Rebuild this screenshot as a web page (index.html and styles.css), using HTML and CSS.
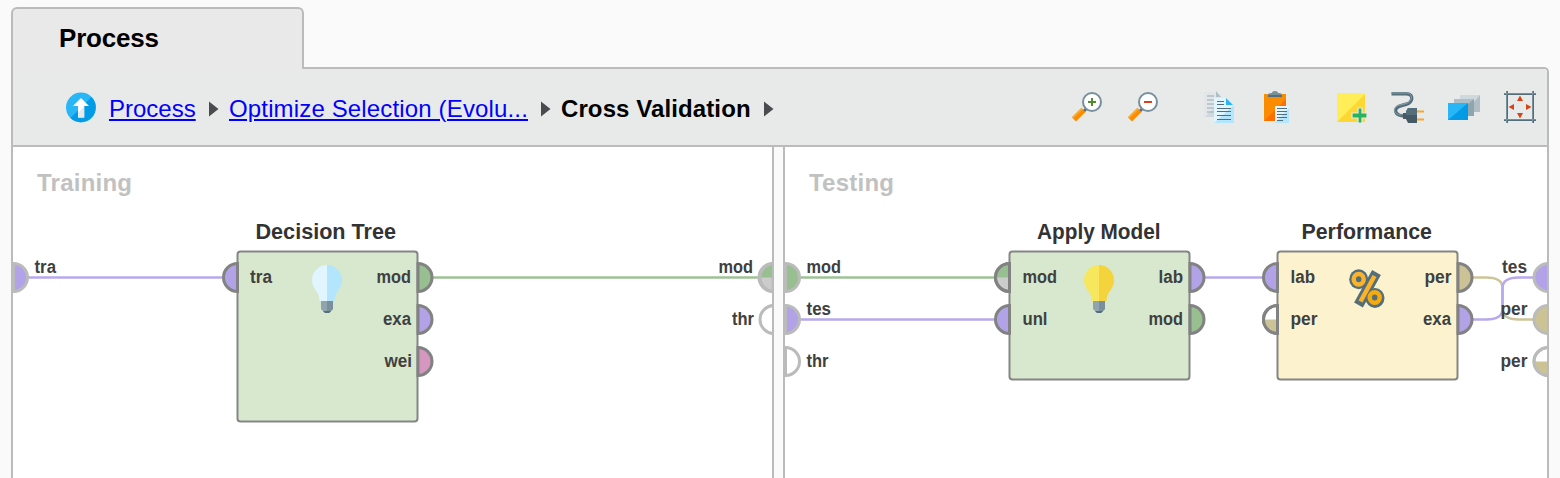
FILE: index.html
```html
<!DOCTYPE html>
<html lang="en">
<head>
<meta charset="utf-8">
<title>Process</title>
<link rel="stylesheet" href="styles.css">
</head>
<body>
<div class="tab">Process</div>
<main class="panel">
  <header class="bar">
    <nav class="crumbs">
      <svg class="up" viewBox="0 0 30 30"><circle cx="15" cy="15" r="15" fill="#29b6f6"/><path d="M25.6 4.4A15 15 0 0 1 4.4 25.6Z" fill="#039be5"/><path d="M15 5.500L23 13.500H18.200V25H12V13.500H7Z" fill="#fff"/><path d="M18.200 14V25H12V20.200Z" fill="#e8eaea"/></svg>
      <a class="link first" href="#">Process</a>
      <svg class="arrow" viewBox="0 0 10 16"><path d="M0 .5 9.500 8 0 15.500Z"/></svg>
      <a class="link second" href="#">Optimize Selection (Evolu...</a>
      <svg class="arrow" viewBox="0 0 10 16"><path d="M0 .5 9.500 8 0 15.500Z"/></svg>
      <strong class="current">Cross Validation</strong>
      <svg class="arrow" viewBox="0 0 10 16"><path d="M0 .5 9.500 8 0 15.500Z"/></svg>
    </nav>
    <div class="tools">
      <svg viewBox="0 0 32 32"><path d="M15 17 11 21" stroke="#546e7a" stroke-width="3"/><path d="M11.500 19 2 28.500" stroke="#fb8c00" stroke-width="5.500"/><path d="M10 17.500 0.500 27" stroke="#ffa726" stroke-width="2"/><circle cx="20" cy="11" r="9" fill="#fff" stroke="#78909c" stroke-width="2"/><path d="M16 11H24M20 7V15" stroke="#558b2f" stroke-width="2"/></svg>
      <svg viewBox="0 0 32 32"><path d="M15 17 11 21" stroke="#546e7a" stroke-width="3"/><path d="M11.500 19 2 28.500" stroke="#fb8c00" stroke-width="5.500"/><path d="M10 17.500 0.500 27" stroke="#ffa726" stroke-width="2"/><circle cx="20" cy="11" r="9" fill="#fff" stroke="#78909c" stroke-width="2"/><path d="M16 11H24" stroke="#d84315" stroke-width="2"/></svg>
      <svg class="group" viewBox="0 0 32 32"><path d="M0 1H12L17 6V26H0Z" fill="#e2e6e9"/><path d="M17 10V26H1Z" fill="#cfd8dc"/><path d="M12 0V6H17Z" fill="#b0bec5"/><path d="M3 5H10M3 9H10M3 13H10M3 17H10M3 21H10" stroke="#b0bec5" stroke-width="1.400"/><path d="M10 7H22L30 15V32H10Z" fill="#e1f5fe"/><path d="M30 14V32H10Z" fill="#b3e5fc"/><path d="M22 7V14H29Z" fill="#29b6f6"/><path d="M13 10.500H20M13 13.500H20M13 17.500H27M13 20.500H27M13 24.500H27M13 28.500H27" stroke="#546e7a" stroke-width="1.200"/></svg>
      <svg viewBox="0 0 32 32"><path d="M4 3H26V30H4Z" fill="#fb8c00"/><path d="M26 8V30H4Z" fill="#ff6f00"/><path d="M8 6V4Q8 2 11 2H12Q12 0 15 0T18 2H19Q22 2 22 4V6Z" fill="#78909c"/><path d="M8 4H22V6H8Z" fill="#546e7a"/><path d="M15 15H29V32H15Z" fill="#e1f5fe"/><path d="M29 17V32H15Z" fill="#b3e5fc"/><path d="M17 17.500H27M17 20.500H27M17 23.500H27M17 26.500H27M17 29.500H23" stroke="#546e7a" stroke-width="1.200"/></svg>
      <svg class="group" viewBox="0 0 32 32"><path d="M1 2H29V31H1Z" fill="#ffee58"/><path d="M29 3V31H1Z" fill="#fdd835"/><path d="M22 17H26V22H31V27H26V32H22V27H16V22H22Z" fill="#27b35f" stroke="#e8eaea" stroke-width="1.200"/></svg>
      <svg viewBox="0 0 32 32"><path d="M-.500 2.700H14C23 2.700 20 12 15 13L8 15C1 17 2 25 13 25" fill="none" stroke="#546e7a" stroke-width="3.400"/><path d="M-.500 2H14C22 2 20 11 14 12.500L8 14C0 16 1 23 9 24" fill="none" stroke="#90a4ae" stroke-width="1"/><path d="M11 22H14L16 17H25V32H16L14 28H11Z" fill="#455a64"/><path d="M14 20 16 17H25V24H14Z" fill="#546e7a"/><path d="M25 20.500H32M25 28.500H32" stroke="#f9a825" stroke-width="2"/></svg>
      <svg viewBox="0 0 32 32"><path d="M12 4H32V21H12Z" fill="#cfd8dc"/><path d="M32 4V21H18Z" fill="#b0bec5"/><path d="M6 8H26V25H6Z" fill="#b0bec5"/><path d="M26 8V25H6Z" fill="#90a4ae"/><path d="M0 12H20V29H0Z" fill="#29b6f6"/><path d="M20 12V29H0Z" fill="#039be5"/></svg>
      <svg viewBox="0 0 32 32"><path d="M3 0V32M29 0V32M0 3H32M0 29H32" stroke="#546e7a" stroke-width="2"/><path d="M0 2.500H32M0 28.500H32M2.500 0V32M28.500 0V32" stroke="#78909c" stroke-width="1"/><path d="M16 4.500 19 10H13ZM16 27.500 13 22H19ZM4.500 16 10 13V19ZM27.500 16 22 19V13Z" fill="#d84315"/></svg>
    </div>
  </header>
  <div class="panes">
    <section class="pane training">
      <svg viewBox="13 147 759 331">
        <text class="heading" x="37" y="191" textLength="95">Training</text>
        <path class="link-line purple" d="M28 277.500H222"/>
        <path class="link-line green" d="M432 277.500H758"/>
        <text class="title" x="255.500" y="239" textLength="140.500" lengthAdjust="spacingAndGlyphs">Decision Tree</text>
        <rect class="node model" x="237.500" y="251.500" width="180" height="170" rx="3"/>
        <g class="outer">
          <path class="p" d="M13.500 263.500A14 14 0 0 1 13.500 291.500Z"/>
          <path class="grey" d="M773 263.500A14 14 0 0 0 773 291.500Z"/>
          <path class="g half" d="M759 277.500A14 14 0 0 1 773 263.500V277.500Z"/>
          <path class="none" d="M774 263.500A14 14 0 0 0 774 291.500Z"/>
          <path class="w" d="M774 305.500A14 14 0 0 0 774 333.500Z"/>
        </g>
        <g class="inner">
          <path class="p" d="M237.500 263.500A14 14 0 0 0 237.500 291.500Z"/>
          <path class="g" d="M418 263.500A14 14 0 0 1 418 291.500Z"/>
          <path class="p" d="M418 305.500A14 14 0 0 1 418 333.500Z"/>
          <path class="pink" d="M418 347.500A14 14 0 0 1 418 375.500Z"/>
        </g>
        <g class="label">
          <text x="34.500" y="273" textLength="21.500" lengthAdjust="spacingAndGlyphs">tra</text>
          <text x="250" y="283" textLength="22" lengthAdjust="spacingAndGlyphs">tra</text>
          <text x="376.500" y="283" textLength="34.500" lengthAdjust="spacingAndGlyphs">mod</text>
          <text x="383" y="325" textLength="28" lengthAdjust="spacingAndGlyphs">exa</text>
          <text x="384.500" y="367" textLength="27.500" lengthAdjust="spacingAndGlyphs">wei</text>
          <text x="718.500" y="273" textLength="34.500" lengthAdjust="spacingAndGlyphs">mod</text>
          <text x="732" y="325" textLength="22" lengthAdjust="spacingAndGlyphs">thr</text>
        </g>
        <path d="M327 265V308H323.500Q321 306 321 301H319.500C319.500 290 312 290 312 280A15 15 0 0 1 327 265Z" fill="#e1f5fe"/>
        <path d="M327 265A15 15 0 0 1 342 280C342 290 334.500 291 334.500 301H327Z" fill="#b3e5fc"/>
        <path d="M321 301H333V309L329 313H325L321 309Z" fill="#90a4ae"/><path d="M327 301H333V309L329 313H327Z" fill="#78909c"/><path d="M323 311H331L329 313H325Z" fill="#546e7a"/>
      </svg>
    </section>
    <div class="splitter"></div>
    <section class="pane testing">
      <svg viewBox="785 147 762 331">
        <text class="heading" x="809" y="191" textLength="85">Testing</text>
        <path class="link-line green" d="M800 277.500H995"/>
        <path class="link-line purple" d="M800 319.500H995M1203 277.500H1264"/>
        <path class="link-line tan" d="M1472 277.500H1486Q1502.500 277.500 1502.500 288V309Q1502.500 319.500 1519 319.500H1534"/>
        <path class="link-line purple" d="M1472 319.500H1486Q1502.500 319.500 1502.500 309V288Q1502.500 277.500 1519 277.500H1534"/>
        <text class="title" x="1037" y="239" textLength="123.500" lengthAdjust="spacingAndGlyphs">Apply Model</text>
        <text class="title" x="1301.500" y="239" textLength="130.500" lengthAdjust="spacingAndGlyphs">Performance</text>
        <rect class="node model" x="1009.500" y="251.500" width="180" height="128" rx="3"/>
        <rect class="node measure" x="1277.500" y="251.500" width="180" height="128" rx="3"/>
        <g class="outer">
          <path class="g" d="M785.500 263.500A14 14 0 0 1 785.500 291.500Z"/>
          <path class="p" d="M785.500 305.500A14 14 0 0 1 785.500 333.500Z"/>
          <path class="w" d="M785.500 347.500A14 14 0 0 1 785.500 375.500Z"/>
          <path class="p" d="M1548.500 263.500A14.500 14 0 0 0 1548.500 291.500Z"/>
          <path class="t" d="M1548.500 305.500A14.500 14 0 0 0 1548.500 333.500Z"/>
          <path class="w" d="M1548.500 347.500A14.500 14 0 0 0 1548.500 375.500Z"/>
          <path class="t half" d="M1534 361.500A14 14 0 0 0 1548.500 375.500V361.500Z"/>
          <path class="none" d="M1548.500 347.500A14.500 14 0 0 0 1548.500 375.500Z"/>
        </g>
        <g class="inner">
          <path class="grey" d="M1009.500 263.500A14 14 0 0 0 1009.500 291.500Z"/>
          <path class="g half" d="M995.500 277.500A14 14 0 0 1 1009.500 263.500V277.500Z"/>
          <path class="none" d="M1009.500 263.500A14 14 0 0 0 1009.500 291.500Z"/>
          <path class="p" d="M1009.500 305.500A14 14 0 0 0 1009.500 333.500Z"/>
          <path class="p" d="M1190 263.500A14 14 0 0 1 1190 291.500Z"/>
          <path class="g" d="M1190 305.500A14 14 0 0 1 1190 333.500Z"/>
          <path class="p" d="M1277.500 263.500A14 14 0 0 0 1277.500 291.500Z"/>
          <path class="w" d="M1277.500 305.500A14 14 0 0 0 1277.500 333.500Z"/>
          <path class="t half" d="M1263.500 319.500A14 14 0 0 0 1277.500 333.500V319.500Z"/>
          <path class="none" d="M1277.500 305.500A14 14 0 0 0 1277.500 333.500Z"/>
          <path class="t" d="M1458 263.500A14 14 0 0 1 1458 291.500Z"/>
          <path class="p" d="M1458 305.500A14 14 0 0 1 1458 333.500Z"/>
        </g>
        <g class="label">
          <text x="806.500" y="273" textLength="34.500" lengthAdjust="spacingAndGlyphs">mod</text>
          <text x="806.500" y="315" textLength="24.500" lengthAdjust="spacingAndGlyphs">tes</text>
          <text x="806.500" y="367" textLength="22" lengthAdjust="spacingAndGlyphs">thr</text>
          <text x="1022.500" y="283" textLength="34.500" lengthAdjust="spacingAndGlyphs">mod</text>
          <text x="1022.500" y="325" textLength="25" lengthAdjust="spacingAndGlyphs">unl</text>
          <text x="1158.500" y="283" textLength="24.500" lengthAdjust="spacingAndGlyphs">lab</text>
          <text x="1148.500" y="325" textLength="34.500" lengthAdjust="spacingAndGlyphs">mod</text>
          <text x="1290.500" y="283" textLength="24.500" lengthAdjust="spacingAndGlyphs">lab</text>
          <text x="1290.500" y="325" textLength="27" lengthAdjust="spacingAndGlyphs">per</text>
          <text x="1424.500" y="283" textLength="27" lengthAdjust="spacingAndGlyphs">per</text>
          <text x="1423" y="325" textLength="28" lengthAdjust="spacingAndGlyphs">exa</text>
          <text x="1502" y="273" textLength="25" lengthAdjust="spacingAndGlyphs">tes</text>
          <text x="1500.500" y="315" textLength="27" lengthAdjust="spacingAndGlyphs">per</text>
          <text x="1500.500" y="367" textLength="27" lengthAdjust="spacingAndGlyphs">per</text>
        </g>
        <path d="M1099 265V301H1091.500C1091.500 290 1084 290 1084 280A15 15 0 0 1 1099 265Z" fill="#f6e75f"/>
        <path d="M1099 265A15 15 0 0 1 1114 280C1114 290 1106.500 291 1106.500 301H1099Z" fill="#f4d33c"/>
        <path d="M1093 301H1105V309L1101 313H1097L1093 309Z" fill="#90a4ae"/><path d="M1099 301H1105V309L1101 313H1099Z" fill="#78909c"/><path d="M1095 311H1103L1101 313H1097Z" fill="#546e7a"/>
        <g class="percent">
          <g class="edge"><path d="M1376.500 272.500 1358.500 305"/><ellipse cx="1358.700" cy="279.300" rx="9.500" ry="10"/><ellipse cx="1375" cy="298" rx="9.500" ry="10"/></g>
          <g class="face"><path d="M1374.500 276 1360.500 301.500"/><ellipse cx="1358.700" cy="279.300" rx="5" ry="5.300"/><ellipse class="deep" cx="1374.700" cy="297.500" rx="5" ry="5.300"/></g>
        </g>
      </svg>
    </section>
  </div>
</main>
</body>
</html>
```
FILE: styles.css
```css
* { box-sizing: border-box; }
body {
  margin: 0;
  height: 478px;
  overflow: hidden;
  padding: 7px 12px 0 11px;
  display: flex;
  flex-direction: column;
  background: #fafafa;
  font-family: "Liberation Sans", Arial, sans-serif;
}
.tab {
  width: 293px;
  height: 62px;
  flex: none;
  padding: 11px 0 0 46px;
  border: 2px solid #bbb;
  border-bottom: 0;
  border-radius: 6px 6px 0 0;
  background: #e9e9e9;
  color: #000;
  font-weight: bold;
  font-size: 26px;
  line-height: 36px;
  letter-spacing: -0.2px;
  z-index: 1;
}
.panel {
  width: 1538px;
  height: 411px;
  flex: none;
  margin-top: -2px;
  border: 2px solid #bbb;
  border-bottom: 0;
  border-radius: 0 5px 0 0;
  background: #fff;
}
.bar {
  height: 78px;
  display: flex;
  justify-content: space-between;
  align-items: center;
  padding: 0 12px 0 53px;
  border-bottom: 2px solid #bbb;
  background: #e8eaea;
  border-radius: 0 3px 0 0;
}
.crumbs, .tools { display: flex; align-items: center; }
.crumbs { font-size: 24px; line-height: 28px; padding-top: 3px; }
.up { width: 30px; height: 31px; margin: -3px 13px 0 0; }
.link {
  color: #00f;
  text-decoration: underline;
  text-decoration-thickness: 2px;
  text-underline-offset: 2px;
  white-space: nowrap;
}
.first { width: 87px; }
.second { width: 299px; letter-spacing: 0.15px; }
.arrow { width: 10px; height: 16px; margin: 0 10px 0 13px; fill: #4b4b4f; }
.current { width: 190px; color: #000; white-space: nowrap; letter-spacing: 0.1px; }
.tools { gap: 24px; margin-right: -0.5px; padding-bottom: 1px; }
.tools svg { width: 32px; height: 32px; overflow: visible; }
.tools .group { margin-left: 20px; }
.panes { display: flex; height: 331px; }
.pane { flex: none; height: 331px; }
.training { width: 759px; }
.testing { width: 762px; }
.pane svg { display: block; width: 100%; height: 100%; }
.splitter {
  flex: none;
  width: 13px;
  background: #fafafa;
  border: 2px solid #bbb;
  border-width: 0 2px;
}
.heading { font-size: 24px; font-weight: bold; fill: #c1c1c1; }
.title { font-size: 22px; font-weight: bold; fill: #333; }
.label text { font-size: 17.500px; font-weight: bold; fill: #404040; }
.node { stroke: #858585; stroke-width: 2; }
.model { fill: #d8e8ce; }
.measure { fill: #fcf3ce; }
.link-line { fill: none; stroke-width: 2.500; }
.purple { stroke: #b7a9ec; }
.green { stroke: #9dc294; }
.tan { stroke: #cdc599; }
.outer { stroke: #bbb; stroke-width: 3; }
.inner { stroke: #828282; stroke-width: 3; }
.p { fill: #b2a3e9; }
.g { fill: #97bf8f; }
.t { fill: #cbc395; }
.w { fill: #fff; }
.pink { fill: #d597bf; }
.grey { fill: #ccc; }
.none { fill: none; }
.half { stroke: none; }
.edge { fill: #546e7a; stroke: none; }
.edge path { stroke: #546e7a; stroke-width: 10; }
.face { fill: none; stroke: #fbb32b; stroke-width: 4.500; }
.face .deep { stroke: #f5aa0e; }
```
